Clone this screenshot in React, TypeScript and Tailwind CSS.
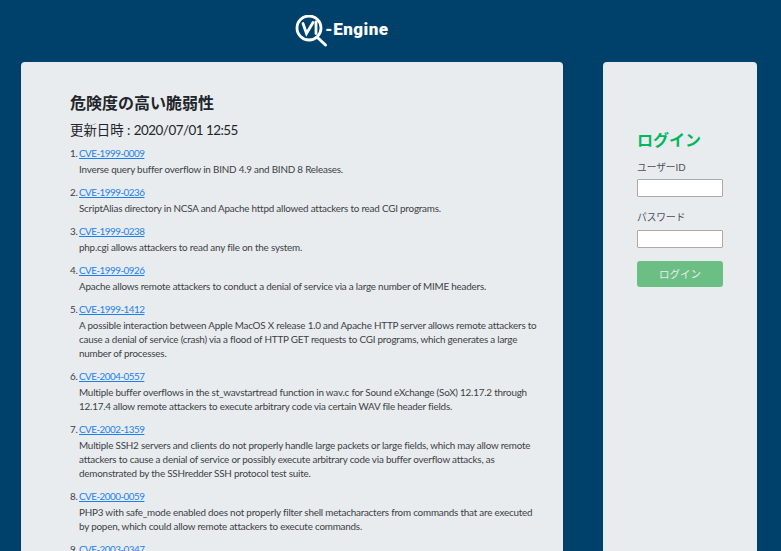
import React from 'react';

const items = [
  { id: 'CVE-1999-0009', lines: ['Inverse query buffer overflow in BIND 4.9 and BIND 8 Releases.'] },
  { id: 'CVE-1999-0236', lines: ['ScriptAlias directory in NCSA and Apache httpd allowed attackers to read CGI programs.'] },
  { id: 'CVE-1999-0238', lines: ['php.cgi allows attackers to read any file on the system.'] },
  { id: 'CVE-1999-0926', lines: ['Apache allows remote attackers to conduct a denial of service via a large number of MIME headers.'] },
  {
    id: 'CVE-1999-1412',
    lines: [
      'A possible interaction between Apple MacOS X release 1.0 and Apache HTTP server allows remote attackers to',
      'cause a denial of service (crash) via a flood of HTTP GET requests to CGI programs, which generates a large',
      'number of processes.',
    ],
  },
  {
    id: 'CVE-2004-0557',
    lines: [
      'Multiple buffer overflows in the st_wavstartread function in wav.c for Sound eXchange (SoX) 12.17.2 through',
      '12.17.4 allow remote attackers to execute arbitrary code via certain WAV file header fields.',
    ],
  },
  {
    id: 'CVE-2002-1359',
    lines: [
      'Multiple SSH2 servers and clients do not properly handle large packets or large fields, which may allow remote',
      'attackers to cause a denial of service or possibly execute arbitrary code via buffer overflow attacks, as',
      'demonstrated by the SSHredder SSH protocol test suite.',
    ],
  },
  {
    id: 'CVE-2000-0059',
    lines: [
      'PHP3 with safe_mode enabled does not properly filter shell metacharacters from commands that are executed',
      'by popen, which could allow remote attackers to execute commands.',
    ],
  },
  { id: 'CVE-2003-0347', lines: [] },
];

const Logo = () => (
  <svg width="34" height="34" viewBox="0 0 34 34" fill="none" stroke="white" strokeLinecap="round">
    <circle cx="14" cy="13" r="12" strokeWidth="2.8" />
    <path d="M23 23l7.5 7" strokeWidth="3" />
    <path d="M8 8.5l3.5 10L18 7.5M21 7v11.5" strokeWidth="2.8" />
  </svg>
);

export default function App() {
  return (
    <div className="h-screen overflow-hidden bg-[#00416b] font-['Lato','Noto_Sans_CJK_JP',sans-serif] text-[#212529]">
      <header className="flex h-[62px] items-start pl-[295px] pt-[15px]">
        <Logo />
        <span className="-ml-[4px] mt-[2px] font-['Roboto',sans-serif] text-[17px] leading-[24px] font-black tracking-[0.5px] text-white">-Engine</span>
      </header>

      <div className="flex items-start pl-[21px]">
        <main className="h-[600px] w-[542px] shrink-0 rounded-[4px] bg-[#e9ecef] pl-[49px] pt-[29px]">
          <h1 className="text-[16px] leading-[24px] font-bold text-[#212529]">危険度の高い脆弱性</h1>
          <p className="mt-[5px] text-[13.4px] leading-[21px] text-[#212529]">
            更新日時 : <span className="tracking-[-0.5px]">2020/07/01 12:55</span>
          </p>
          <ol className="mt-[4px] flex flex-col gap-[8px] text-[9.85px] leading-[14px] tracking-[-0.2px] text-[#3a3f44]">
            {items.map((item, i) => (
              <li key={item.id} className="flex">
                <span className="w-[9px] shrink-0 leading-[16px]">{i + 1}.</span>
                <div className="whitespace-nowrap">
                  <a href="#" className="mb-[1px] block leading-[16px] tracking-[-0.5px] text-[#1a80f0] underline">{item.id}</a>
                  {item.lines.map((line) => (
                    <p key={line}>{line}</p>
                  ))}
                </div>
              </li>
            ))}
          </ol>
        </main>

        <aside className="ml-[40px] h-[600px] w-[154px] shrink-0 rounded-[4px] bg-[#e9ecef] pl-[34px] pt-[66px]">
          <h2 className="text-[16px] leading-[24px] font-bold text-[#00b85c]">ログイン</h2>
          <label className="mt-[8px] block text-[9.7px] leading-[15px] text-[#495057]">ユーザーID</label>
          <input className="mt-[4px] block h-[18px] w-[86px] rounded-[1px] border border-[#a9a9a9] bg-white" />
          <label className="mt-[13px] block text-[9.7px] leading-[15px] text-[#495057]">パスワード</label>
          <input className="mt-[5px] block h-[18px] w-[86px] rounded-[1px] border border-[#a9a9a9] bg-white" />
          <button className="mt-[13px] block h-[26px] w-[86px] rounded-[3px] bg-[#6cbf84] pt-[1px] text-[10.5px] text-[#e9ecef]">ログイン</button>
        </aside>
      </div>
    </div>
  );
}
